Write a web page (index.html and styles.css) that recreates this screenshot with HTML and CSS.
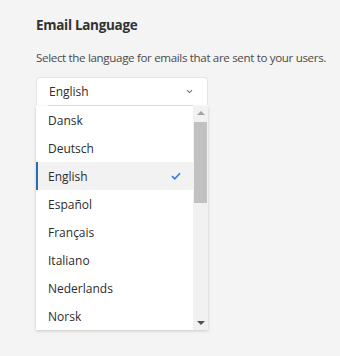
FILE: index.html
```html
<!DOCTYPE html>
<html lang="en">
<head>
  <meta charset="UTF-8">
  <meta name="viewport" content="width=device-width, initial-scale=1.0">
  <title>Email Language</title>
  <link rel="stylesheet" href="styles.css">
</head>
<body>
  <div class="panel">
    <h2 class="title">Email Language</h2>
    <p class="desc">Select the language for emails that are sent to your users.</p>
    <div class="picker">
      <div class="select">
        <span>English</span>
        <svg class="chev" width="7" height="5" viewBox="0 0 7 5"><path d="M1 1.2 L3.5 3.6 L6 1.2" fill="none" stroke="#6e6e6e" stroke-width="1.1"/></svg>
      </div>
      <div class="divider"></div>
      <div class="menu">
        <ul class="options">
          <li>Dansk</li>
          <li>Deutsch</li>
          <li class="selected">English
            <svg class="check" width="10" height="8" viewBox="0 0 10 8"><path d="M1 4.2 L3.7 6.8 L9 1.2" fill="none" stroke="#2680eb" stroke-width="1.6"/></svg>
          </li>
          <li>Español</li>
          <li>Français</li>
          <li>Italiano</li>
          <li>Nederlands</li>
          <li>Norsk</li>
        </ul>
        <div class="scrollbar">
          <span class="arrow up"></span>
          <div class="track"><div class="thumb"></div></div>
          <span class="arrow down"></span>
        </div>
      </div>
    </div>
  </div>
</body>
</html>
```

FILE: styles.css
```css
html,body{
  margin: 0;
  height: 100%;
}
body{
  background: #f4f4f4;
  font-family: "Open Sans", "Noto Sans", sans-serif;
  color: #2c2c2c;
}
.panel{
  padding: 14px 0 0 36px;
}
.title{
  margin: 0;
  font-size: 13.5px;
  font-weight: 700;
  letter-spacing: -0.3px;
  color: #323232;
  line-height: 22px;
}
.desc{
  margin: 14px 0 0;
  font-size: 11.6px;
  letter-spacing: -0.35px;
  color: #4b4b4b;
  line-height: 16px;
}
.picker{
  margin-top: 11px;
  width: 172px;
}
.select{
  height: 28px;
  box-sizing: border-box;
  background: #fff;
  border: 1px solid #e4e4e4;
  border-bottom: none;
  border-radius: 4px 4px 0 0;
  display: flex;
  align-items: center;
  justify-content: space-between;
  padding: 0 14px 0 12px;
  font-size: 12px;
}
.divider{
  height: 1px;
  background: linear-gradient(to right, #fff 12px, #e4e4e4 12px, #e4e4e4 157px, #fff 157px);
}
.menu{
  display: flex;
  background: #fff;
  box-shadow: 0 1px 3px rgba(0,0,0,.18);
  height: 224px;
}
.options{
  list-style: none;
  margin: 0;
  padding: 0;
  flex: 1;
}
.options li{
  height: 28px;
  display: flex;
  align-items: center;
  justify-content: space-between;
  padding: 0 12px 0 10px;
  font-size: 12px;
  border-left: 2px solid transparent;
  box-sizing: border-box;
}
.options li.selected{
  background: #f2f2f2;
  border-left-color: #2b6bb3;
}
.scrollbar{
  width: 15px;
  background: #f1f1f1;
  display: flex;
  flex-direction: column;
  align-items: center;
}
.arrow{
  width: 0;
  height: 0;
  border-left: 4px solid transparent;
  border-right: 4px solid transparent;
}
.arrow.up{
  border-bottom: 4px solid #a3a3a3;
  margin: 5px 0;
}
.arrow.down{
  border-top: 4px solid #505050;
  margin: 5px 0;
}
.track{
  flex: 1;
  width: 100%;
}
.thumb{
  height: 81px;
  margin: 2px 1px 0;
  background: #c1c1c1;
}
```
